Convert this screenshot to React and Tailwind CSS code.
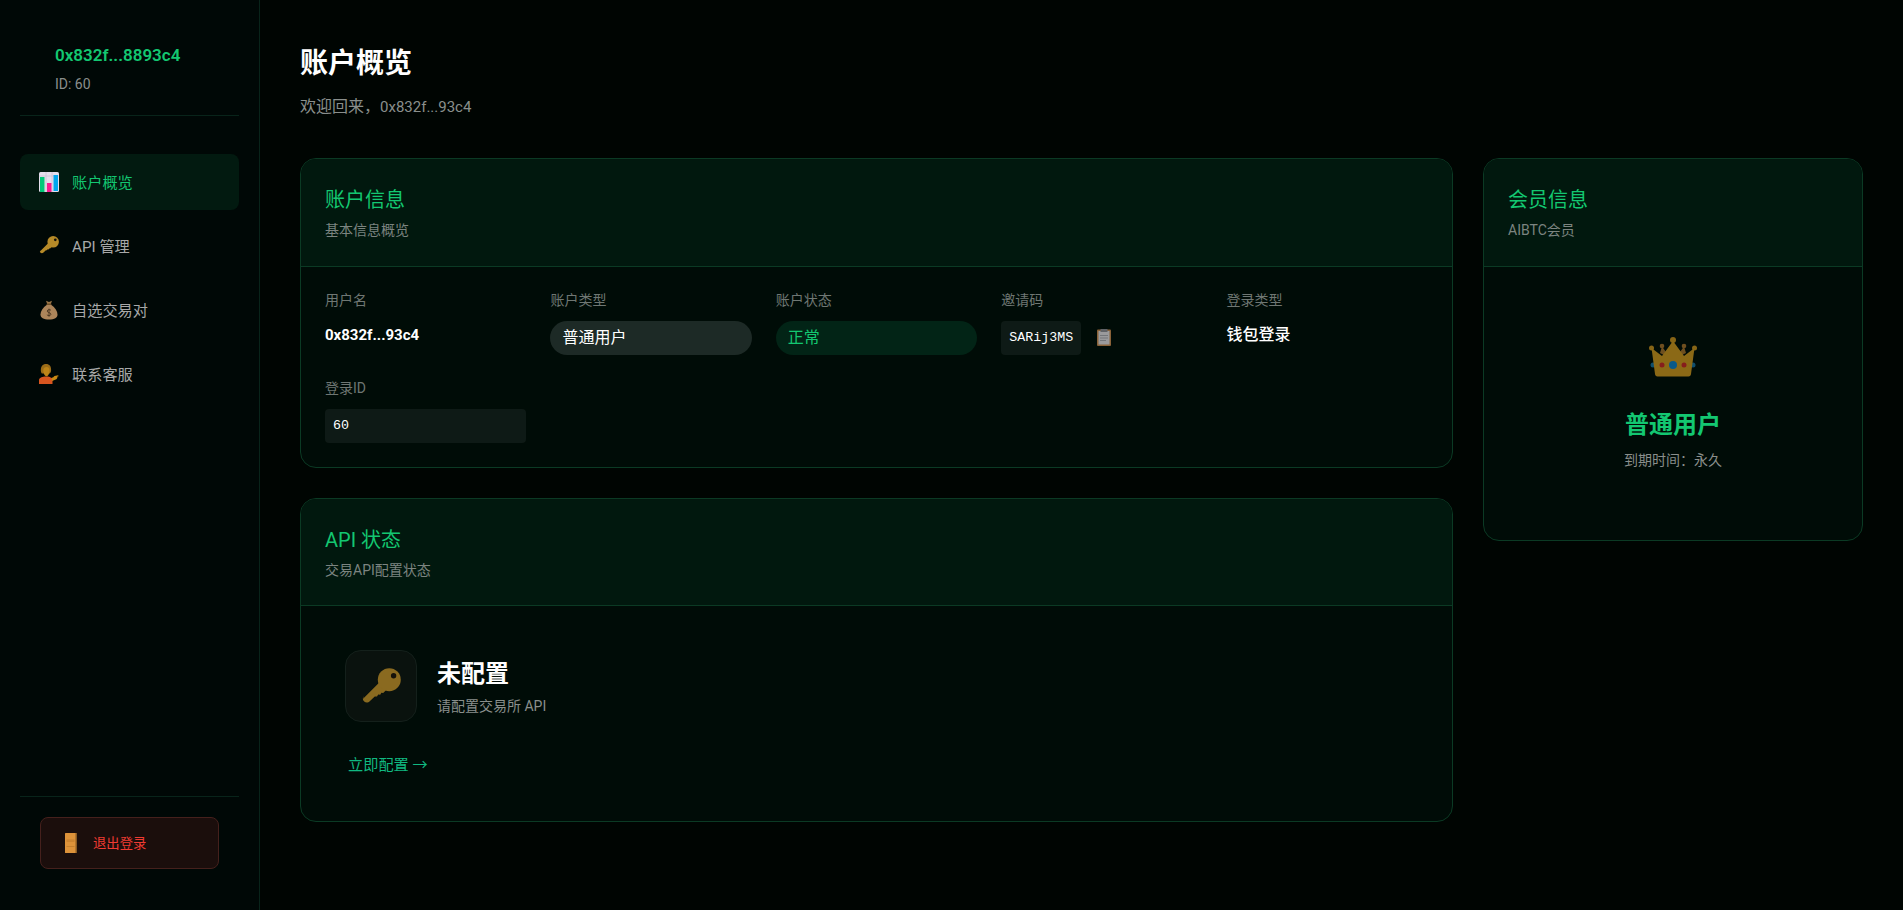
const font = "font-['Roboto','Noto_Sans_CJK_SC',sans-serif]";

function ChartIcon() {
  return (
    <svg viewBox="0 0 20 20" className="h-5 w-5 shrink-0">
      <rect x="0" y="0" width="20" height="20" rx="1.5" fill="#e4deec" />
      <path d="M0 4h20M7 0v20M13 0v20" stroke="#c9c2d6" strokeWidth="0.8" />
      <rect x="1" y="5" width="4.5" height="15" fill="#00c878" />
      <rect x="8" y="11" width="4.5" height="9" fill="#fa1a8e" />
      <rect x="14.5" y="3" width="4.5" height="16" fill="#00a6ee" />
    </svg>
  );
}

function KeyIcon({ className }) {
  return (
    <svg viewBox="0 0 20 20" className={className}>
      <path d="M.9 15.500 9.900 6.500l3.600 3.600-2.400 2.400-.9-.1-.6 1-1-.1-.6 1-1.100-.1-2.400 2.300c-.9.900-2 1-2.900.3-.9-.8-.9-1.900-.1-2.800z" fill="currentColor" />
      <circle cx="14.150" cy="5.850" r="5.750" fill="currentColor" />
      <circle cx="16.300" cy="3.850" r="1.350" fill="#16120a" />
    </svg>
  );
}

function BagIcon() {
  return (
    <svg viewBox="0 0 20 20" className="h-5 w-5 shrink-0">
      <path d="M7 .8 10 2l3-1.2-1.3 3.4H8.300z" fill="#9c7648" />
      <rect x="7.500" y="3.600" width="5" height="1.600" rx="0.800" fill="#6f5028" />
      <path d="M7.600 5C4 7.500 1.500 11 1.500 14.500 1.500 18 4.500 19.500 10 19.500s8.500-1.500 8.500-5C18.500 11 16 7.500 12.400 5z" fill="#ad855a" />
      <path d="M12 10.300c-.6-.8-3.600-1-3.800.7-.2 1.900 3.800 1.300 3.700 3.300-.1 1.700-3.200 1.500-4 .5M10 8.700v8" fill="none" stroke="#4a3620" strokeWidth="0.900" />
    </svg>
  );
}

function PersonIcon() {
  return (
    <svg viewBox="0 0 20 20" className="h-5 w-5 shrink-0">
      <path d="M0 20v-3.500C0 14 2.500 12.800 5.500 12.500h3.500c1.500.2 2.400.8 3.500 1.500l1 .2V20z" fill="#d8551f" />
      <path d="M12.500 14c1.500-.4 2.300-1 3-1.900l3.700-.9.300 1-1.800.8.900.6-1.200 1.700-4.400 1.700z" fill="#c98a14" />
      <path d="M2.800 9.500C1.300 8 1.500 3 3.500 1.300 5.500-.4 9.500-.4 11 1.800c1.500 2 1.500 6.300-.2 7.700z" fill="#9a6c18" />
      <path d="M4.300 6.500C4.300 3.800 5.800 3 7.500 3c1.800 0 3 .8 3 3.500 0 2.800-1.300 5.800-3 5.800S4.300 9.300 4.300 6.500z" fill="#bd8418" />
    </svg>
  );
}

function DoorIcon() {
  return (
    <svg viewBox="0 0 12 20" className="h-5 w-3 shrink-0">
      <rect x="0" y="0" width="11.500" height="20" rx="0.500" fill="#dd923a" />
      <rect x="10.500" y="0" width="1.500" height="20" fill="#8a5a22" />
      <path d="M1.500 7h8M1.500 8.200h8M1.500 13.500h8" stroke="#c47f2e" strokeWidth="1" />
    </svg>
  );
}

function ClipboardIcon() {
  return (
    <svg viewBox="0 0 14 17" className="h-[17px] w-[14px] shrink-0">
      <rect x="0" y="0.500" width="14" height="16.500" rx="1" fill="#8a6238" />
      <rect x="1.500" y="2" width="11" height="13.500" fill="#9a9a9c" />
      <rect x="3.500" y="0" width="7" height="3" fill="#606266" />
      <path d="M3 6.500h8M3 9h8M3 11.500h6" stroke="#74767a" strokeWidth="1" />
    </svg>
  );
}

function CrownIcon() {
  return (
    <svg viewBox="0 0 48 40" className="h-10 w-12 opacity-60">
      <circle cx="2.500" cy="11" r="2.500" fill="#e0a020" />
      <circle cx="45.500" cy="11" r="2.500" fill="#e0a020" />
      <circle cx="24" cy="3" r="3" fill="#e0a020" />
      <circle cx="13" cy="9" r="2.300" fill="#b87c30" />
      <circle cx="35" cy="9" r="2.300" fill="#b87c30" />
      <path d="M13 9.500 11 16l4 2 2-3zM35 9.500 37 16l-4 2-2-3z" fill="#b87c30" />
      <circle cx="4" cy="28" r="2.500" fill="#1a7ab0" />
      <circle cx="44" cy="28" r="2.500" fill="#1a7ab0" />
      <path d="M2.500 11 13 19 24 4 35 19 45.500 11 42 37c-.2 1.500-1 2.500-2.500 2.500h-31C7 39.500 6.200 38.500 6 37z" fill="#e8a820" />
      <circle cx="13" cy="28" r="2.500" fill="#e02a2a" />
      <circle cx="35" cy="28" r="2.500" fill="#e02a2a" />
      <circle cx="24" cy="28" r="4" fill="#0f8ce0" />
    </svg>
  );
}

const navItems = [
  { label: '账户概览', icon: <ChartIcon />, active: true },
  { label: 'API 管理', icon: <KeyIcon className="h-5 w-5 shrink-0 text-[#b58a28]" /> },
  { label: '自选交易对', icon: <BagIcon /> },
  { label: '联系客服', icon: <PersonIcon /> },
];

function NavItem({ item }) {
  return (
    <div
      className={`flex h-14 items-center gap-[13px] rounded-lg px-[19px] text-[15.2px] ${
        item.active ? 'bg-[#021a10] text-[#13c771]' : 'text-[#a8a8a8]'
      }`}
    >
      {item.icon}
      <span className="pt-[2px]">{item.label}</span>
    </div>
  );
}

function Card({ title, subtitle, children }) {
  return (
    <section className="overflow-hidden rounded-2xl border border-[#0b3a24] bg-[#000c07]">
      <header className="border-b border-[#0b3a24] bg-[#01180e] px-6 pt-[26px] pb-[24.6px]">
        <h2 className="text-[20px] leading-[30px] font-normal text-[#13c771]">{title}</h2>
        <p className="mt-[5px] text-[14px] leading-[21px] text-[#7c8480]">{subtitle}</p>
      </header>
      {children}
    </section>
  );
}

function Field({ label, children }) {
  return (
    <div>
      <div className="mb-[10px] text-[14px] leading-[21px] text-[#6f7773]">{label}</div>
      {children}
    </div>
  );
}

function Code({ children }) {
  return (
    <code className="flex h-[34px] items-center rounded bg-[#0e1a16] px-2 font-['Liberation_Mono',monospace] text-[13.33px] text-white">
      {children}
    </code>
  );
}

export default function App() {
  return (
    <div className={`flex h-screen overflow-hidden bg-black text-white ${font}`}>
      <aside className="flex w-[260px] shrink-0 flex-col border-r border-[#08241a] bg-[#000806] px-5">
        <div className="border-b border-[#08241a] pt-[43px] pb-[21px] pl-[35px]">
          <div className="text-[17px] leading-6 font-semibold text-[#13c771]">0x832f...8893c4</div>
          <div className="mt-[7px] text-[14px] leading-5 text-[#8a8f8c]">ID: 60</div>
        </div>
        <nav className="mt-[38px] flex flex-1 flex-col gap-2">
          {navItems.map((item) => (
            <NavItem key={item.label} item={item} />
          ))}
        </nav>
        <div className="border-t border-[#08241a] px-5 pt-5 pb-[41px]">
          <button className="flex h-[52px] w-full items-center gap-4 rounded-lg border border-[#45201c] bg-[#1b0e0c] pl-6 text-[13.33px] text-[#ef3b32]">
            <DoorIcon />
            <span className="pt-[2px]">退出登录</span>
          </button>
        </div>
      </aside>

      <main className="min-w-0 flex-1 bg-[#000502] p-10">
        <h1 className="pt-[3px] text-[28px] leading-[42px] font-bold text-white">账户概览</h1>
        <p className="mt-[10px] text-[16px] leading-6 text-[#8a8f8c]">
          欢迎回来，<span className="text-[15px]">0x832f...93c4</span>
        </p>

        <div className="mt-[39px] grid grid-cols-[1fr_380px] items-start gap-[30px]">
          <div className="flex flex-col gap-[30px]">
            <Card title="账户信息" subtitle="基本信息概览">
              <div className="grid grid-cols-5 gap-x-6 gap-y-[23px] px-6 pt-[23px] pb-6">
                <Field label="用户名">
                  <div className="text-[15px] leading-7 font-bold">0x832f...93c4</div>
                </Field>
                <Field label="账户类型">
                  <div className="flex h-[34px] items-center rounded-full bg-[#1d2a26] px-3 text-[16px]">普通用户</div>
                </Field>
                <Field label="账户状态">
                  <div className="flex h-[34px] items-center rounded-full bg-[#022416] px-3 text-[16px] text-[#13c771]">正常</div>
                </Field>
                <Field label="邀请码">
                  <div className="flex items-center gap-4">
                    <Code>SARij3MS</Code>
                    <ClipboardIcon />
                  </div>
                </Field>
                <Field label="登录类型">
                  <div className="text-[16px] leading-7 font-medium">钱包登录</div>
                </Field>
                <Field label="登录ID">
                  <Code>60</Code>
                </Field>
              </div>
            </Card>

            <Card title="API 状态" subtitle="交易API配置状态">
              <div className="px-6 pt-6 pb-[44.5px]">
                <div className="flex items-center gap-5 p-5">
                  <div className="flex h-[72px] w-[72px] items-center justify-center rounded-2xl border border-[#14201b] bg-[#0a120e]">
                    <KeyIcon className="mt-1 h-10 w-10 text-[#8a6a20]" />
                  </div>
                  <div className="pt-px">
                    <div className="text-[24px] leading-9 font-bold">未配置</div>
                    <div className="mt-1 text-[14px] leading-[21px] text-[#8a8f8c]">请配置交易所 API</div>
                  </div>
                </div>
                <div className="mt-[10.5px] px-[23px] text-[15.2px] leading-6 text-[#10b981]">立即配置 →</div>
              </div>
            </Card>
          </div>

          <Card title="会员信息" subtitle="AIBTC会员">
            <div className="flex flex-col items-center pt-[70px] pb-[69px]">
              <CrownIcon />
              <div className="mt-[30px] text-[24px] leading-9 font-bold text-[#13c771]">普通用户</div>
              <div className="mt-[7px] text-[14px] leading-[21px] text-[#8a8f8c]">到期时间：永久</div>
            </div>
          </Card>
        </div>
      </main>
    </div>
  );
}
